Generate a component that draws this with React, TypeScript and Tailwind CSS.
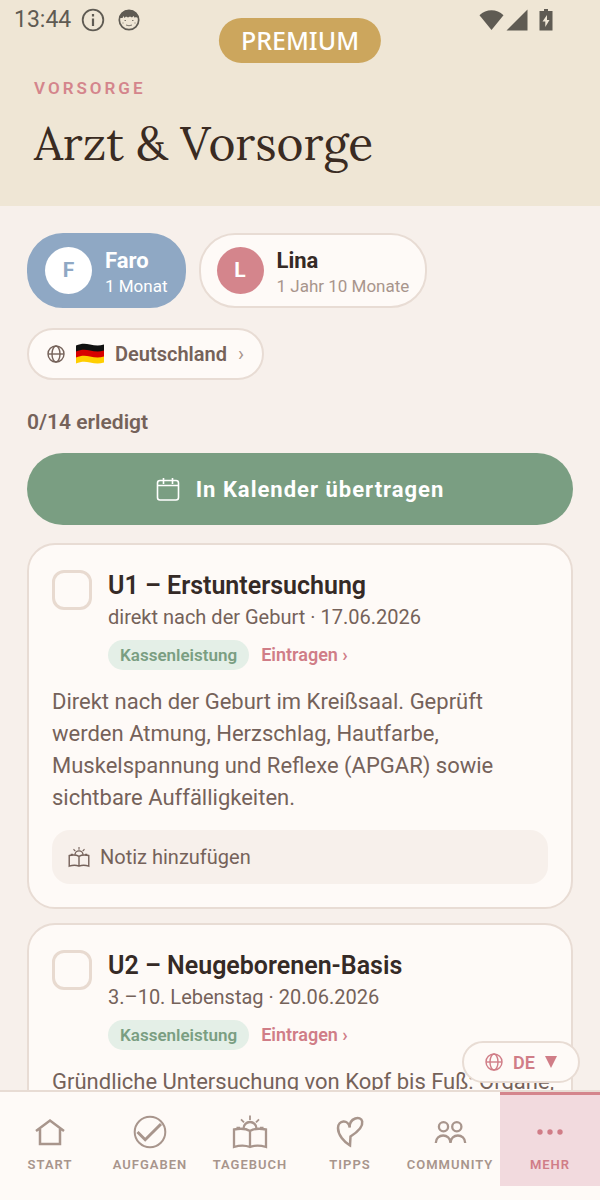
import React, { useState } from "react";
import { clsx } from "clsx";

type Child = {
  id: string;
  name: string;
  age: string;
};

type Checkup = {
  id: string;
  title: string;
  when: string;
  text: string;
};

type IconProps = { className?: string };

const children: Child[] = [
  { id: "faro", name: "Faro", age: "1 Monat" },
  { id: "lina", name: "Lina", age: "1 Jahr 10 Monate" },
];

const checkups: Checkup[] = [
  {
    id: "u1",
    title: "U1 – Erstuntersuchung",
    when: "direkt nach der Geburt · 17.06.2026",
    text: "Direkt nach der Geburt im Kreißsaal. Geprüft werden Atmung, Herzschlag, Hautfarbe, Muskelspannung und Reflexe (APGAR) sowie sichtbare Auffälligkeiten.",
  },
  {
    id: "u2",
    title: "U2 – Neugeborenen-Basis",
    when: "3.–10. Lebenstag · 20.06.2026",
    text: "Gründliche Untersuchung von Kopf bis Fuß: Organe,",
  },
];

function Svg({
  className,
  size = 36,
  stroke = 2.5,
  children,
}: IconProps & { size?: number; stroke?: number; children: React.ReactNode }) {
  return (
    <svg
      className={className}
      viewBox={`0 0 ${size} ${size}`}
      fill="none"
      stroke="currentColor"
      strokeWidth={stroke}
      aria-hidden="true"
    >
      {children}
    </svg>
  );
}

const HomeIcon = ({ className }: IconProps) => (
  <Svg className={className}>
    <path d="M4 17 18 6.5 32 17M8 15v15h20V15" />
  </Svg>
);

const TasksIcon = ({ className }: IconProps) => (
  <Svg className={className} stroke={2}>
    <circle cx="18" cy="18" r="15.3" />
    <path d="m5.5 18 7.700 7.700L29 10" strokeWidth="3" />
  </Svg>
);

const DiaryIcon = ({ className }: IconProps) => (
  <Svg className={className} stroke={2.3}>
    <path d="M18 17C14 14.500 7 14.500 2 15.500v17.500c5-1.600 12-1.600 16 0 4-1.600 11-1.600 16 0V15.500c-5-1-12-1-16 1.500ZM18 17v16" />
    <path d="M11.500 14.500a6.500 6.500 0 0 1 13 0M4.500 14H8M28 14h3.500" />
    <path d="M18 1.500V6M9 5.300l3 3M27 5.300l-3 3" strokeWidth="1.8" />
  </Svg>
);

const TipsIcon = ({ className }: IconProps) => (
  <Svg className={className}>
    <path d="M18 31.500C12 28 6 21 6 14 6 6 16.500 5 17.700 13.500 17 4 29 1 30.200 7.500 31.200 13 24 19 18.500 22.500Z" />
  </Svg>
);

const CommunityIcon = ({ className }: IconProps) => (
  <Svg className={className} stroke={2.3}>
    <circle cx="11.5" cy="12.8" r="4.6" />
    <circle cx="24.8" cy="12.8" r="4.600" />
    <path d="M3.800 29c0-10 14.700-10 14.700 0 0-10 14.700-10 14.700 0" />
  </Svg>
);

const MoreIcon = ({ className }: IconProps) => (
  <svg className={className} viewBox="0 0 36 36" fill="currentColor" aria-hidden="true">
    <circle cx="8" cy="18" r="2.7" />
    <circle cx="18" cy="18" r="2.7" />
    <circle cx="28" cy="18" r="2.7" />
  </svg>
);

const GlobeIcon = ({ className }: IconProps) => (
  <Svg className={className} size={18} stroke={1.4}>
    <circle cx="9" cy="9" r="8" />
    <ellipse cx="9" cy="9" rx="4" ry="8" />
    <path d="M1 9h16" />
  </Svg>
);

const CalendarIcon = ({ className }: IconProps) => (
  <Svg className={className} size={24} stroke={1.6}>
    <rect x="1.5" y="3.5" width="21" height="19.5" rx="2.5" />
    <path d="M1.500 8.500h21M7.500 1v6M16.500 1v6" />
  </Svg>
);

const FlagDe = ({ className }: IconProps) => (
  <svg className={className} viewBox="0 0 28 22" aria-hidden="true">
    <path d="M0 2.500C5 .5 9 .5 14 1.500s9 1.500 14 0V12H0Z" fill="#111" />
    <path d="M0 8.500c5-2 9-2 14-1s9 1.500 14 0V16H0Z" fill="#d80000" />
    <path d="M0 14.500c5-2 9-2 14-1s9 1.500 14 0v6c-5 1.500-9 1-14 0s-9-1-14 1Z" fill="#ffce00" />
  </svg>
);

function StatusBar() {
  return (
    <div className="flex h-10 items-center justify-between pl-3.5 pr-[46px] text-[#5f5b53]">
      <div className="flex items-center">
        <span className="text-[23px] leading-8">13:44</span>
        <svg className="ml-2.5 size-6" viewBox="0 0 24 24" fill="none" aria-hidden="true">
          <circle cx="12" cy="12" r="10.3" stroke="currentColor" strokeWidth="1.8" />
          <path d="M12 10.500v7.500M12 6v2.400" stroke="currentColor" strokeWidth="2.2" />
        </svg>
        <svg className="ml-3 size-6" viewBox="0 0 24 24" fill="none" aria-hidden="true">
          <circle cx="12" cy="12" r="9.7" stroke="currentColor" strokeWidth="1.7" />
          <path
            d="M2.500 10C3.500 5 7.500 2 12 2s8.500 3 9.500 8l-3-1-.5 1-1.500-2-1.500 1.500L13 8.500l-2 1-2-1-1.500 1.500L6.500 8l-1 2Z"
            fill="currentColor"
          />
          <path
            d="M7.500 12.500h1.500M15 12.500h1.500M9 17q3 1.500 6 0M5.500 15h1M17.500 15h1"
            stroke="currentColor"
            strokeWidth=".8"
          />
        </svg>
      </div>
      <div className="flex items-center">
        <svg className="h-[22px] w-[25px]" viewBox="0 0 26 22" fill="currentColor" aria-hidden="true">
          <path d="M.5 6C7.500-.8 18.500-.8 25.500 6L13 21.500Z" />
        </svg>
        <svg className="ml-0.5 size-[22px]" viewBox="0 0 22 22" fill="currentColor" aria-hidden="true">
          <path d="M21.500.5v21H.5Z" />
        </svg>
        <svg className="ml-2.5 h-[22px] w-4" viewBox="0 0 16 22" aria-hidden="true">
          <path d="M6 0h4v2h4.500v19.500h-13V2H6Z" fill="currentColor" />
          <path d="M9 6 4.500 12.500h2.800V18L11.500 11H9Z" fill="#efe6d5" />
        </svg>
      </div>
    </div>
  );
}

function ChildChip({
  child,
  active,
  onSelect,
}: {
  child: Child;
  active: boolean;
  onSelect: () => void;
}) {
  return (
    <button
      type="button"
      onClick={onSelect}
      aria-pressed={active}
      className={clsx(
        "flex h-[75px] items-center gap-[13px] rounded-[36px] border-2 px-4 text-left",
        active ? "border-[#8fa8c4] bg-[#8fa8c4]" : "border-[#e8dcd4] bg-[#fefaf7]"
      )}
    >
      <span
        className={clsx(
          "flex size-[47px] items-center justify-center rounded-full text-[21px] font-bold",
          active ? "bg-white text-[#8fa8c4]" : "bg-[#d4858c] text-white"
        )}
      >
        {child.name[0]}
      </span>
      <span className="flex flex-col">
        <span
          className={clsx(
            "text-[22px] leading-[30px] font-bold",
            active ? "text-white" : "text-[#352a26]"
          )}
        >
          {child.name}
        </span>
        <span
          className={clsx(
            "text-[17px] leading-5",
            active ? "text-white" : "text-[#a8958c]"
          )}
        >
          {child.age}
        </span>
      </span>
    </button>
  );
}

function CheckupCard({
  item,
  done,
  onToggle,
}: {
  item: Checkup;
  done: boolean;
  onToggle: () => void;
}) {
  return (
    <article className="rounded-[28px] border-2 border-[#e8dcd4] bg-[#fefaf7] px-[23px] pt-[25px] pb-[23px]">
      <div className="flex gap-4">
        <input
          id={item.id}
          type="checkbox"
          checked={done}
          onChange={onToggle}
          className="size-10 shrink-0 appearance-none rounded-xl border-3 border-[#e8dad0] checked:bg-[#7a9e82]"
        />
        <div>
          <label
            htmlFor={item.id}
            className="block text-[25px] leading-8 font-semibold text-[#352a26]"
          >
            {item.title}
          </label>
          <p className="text-[20px] leading-[30px] text-[#75625a]">{item.when}</p>
          <div className="mt-2 flex items-center gap-3">
            <span className="rounded-full bg-[#e4efe7] px-3 text-[17px] leading-[30px] font-semibold text-[#7a9e82]">
              Kassenleistung
            </span>
            <button
              type="button"
              className="text-[18px] leading-[30px] font-semibold text-[#d07d87]"
            >
              Eintragen ›
            </button>
          </div>
        </div>
      </div>
      <p className="-mr-[11px] mt-4 text-[22px] leading-8 text-[#75625a]">{item.text}</p>
      <button
        type="button"
        className="mt-4 flex h-[54px] w-full items-center gap-2.5 rounded-[18px] bg-[#f7f0eb] px-4 text-[20px] text-[#75625a]"
      >
        <DiaryIcon className="size-[22px]" />
        Notiz hinzufügen
      </button>
    </article>
  );
}

const tabs = [
  { label: "START", icon: HomeIcon },
  { label: "AUFGABEN", icon: TasksIcon },
  { label: "TAGEBUCH", icon: DiaryIcon },
  { label: "TIPPS", icon: TipsIcon },
  { label: "COMMUNITY", icon: CommunityIcon },
  { label: "MEHR", icon: MoreIcon },
];

function TabBar() {
  return (
    <nav className="grid shrink-0 grid-cols-6 border-t-2 border-[#e8dcd4] bg-[#fefaf7] pb-3.5">
      {tabs.map(({ label, icon: Icon }) => {
        const active = label === "MEHR";
        return (
          <a
            key={label}
            href={`#${label.toLowerCase()}`}
            aria-current={active ? "page" : undefined}
            className={clsx(
              "flex h-[94px] flex-col items-center gap-[5px] border-t-3 pt-[19px]",
              active
                ? "border-[#d4858c] bg-[#f2dade] text-[#d07d87]"
                : "border-transparent text-[#a8958c]"
            )}
          >
            <Icon className="size-9" />
            <span className="text-[13px] leading-5 font-semibold tracking-[1px]">
              {label}
            </span>
          </a>
        );
      })}
    </nav>
  );
}

export default function App() {
  const [selected, setSelected] = useState("faro");
  const [done, setDone] = useState<string[]>([]);

  const toggle = (id: string) =>
    setDone((d) => (d.includes(id) ? d.filter((x) => x !== id) : [...d, id]));

  return (
    <div className="flex h-screen flex-col bg-[#f7f0eb] font-[Roboto,sans-serif]">
      {/* Header */}
      <header className="relative shrink-0 bg-[#efe6d5] pb-8">
        <StatusBar />
        <span className="absolute top-[18px] left-1/2 -translate-x-1/2 rounded-full bg-[#cca65d] px-[22px] font-['Noto_Sans',sans-serif] text-[25px] leading-[45px] font-medium text-white">
          PREMIUM
        </span>
        <div className="px-[34px] pt-[38px]">
          <p className="text-[17px] leading-5 font-semibold tracking-[3px] text-[#d4858c]">
            VORSORGE
          </p>
          <h1 className="mt-4 font-[Lora,'Liberation_Serif',serif] text-[46px] leading-[60px] text-[#3a2b22]">
            Arzt &amp; Vorsorge
          </h1>
        </div>
      </header>

      {/* Content */}
      <div className="relative min-h-0 flex-1">
        <main className="h-full overflow-y-auto px-[27px] pt-[27px] [scrollbar-width:none]">
          <div className="flex gap-[13px]">
            {children.map((c) => (
              <ChildChip
                key={c.id}
                child={c}
                active={c.id === selected}
                onSelect={() => setSelected(c.id)}
              />
            ))}
          </div>

          <button
            type="button"
            className="mt-5 flex h-13 items-center gap-[11px] rounded-full border-2 border-[#e8dcd4] bg-[#fefaf7] px-[18px] text-[20px] font-semibold text-[#75625a]"
          >
            <GlobeIcon className="size-[18px]" />
            <FlagDe className="h-[22px] w-7" />
            <span>Deutschland</span>
            <span className="font-normal text-[#a8958c]">›</span>
          </button>

          <p className="mt-[26px] text-[21px] leading-8 font-semibold text-[#75625a]">
            {done.length}/14 erledigt
          </p>

          <button
            type="button"
            className="mt-[15px] flex h-[72px] w-full items-center justify-center gap-4 rounded-full bg-[#7a9e82] text-[22px] font-bold tracking-[1px] text-white"
          >
            <CalendarIcon className="size-6" />
            In Kalender übertragen
          </button>

          <div className="mt-[18px] flex flex-col gap-3.5 pb-6">
            {checkups.map((item) => (
              <CheckupCard
                key={item.id}
                item={item}
                done={done.includes(item.id)}
                onToggle={() => toggle(item.id)}
              />
            ))}
          </div>
        </main>

        {/* Language switch, floats over the list */}
        <button
          type="button"
          className="absolute right-5 bottom-[7px] flex h-[42px] items-center gap-2.5 rounded-full border-2 border-[#e8dcd4] bg-[#fefaf7] px-[21px] text-[18px] font-semibold text-[#d07d87]"
        >
          <GlobeIcon className="size-[18px]" />
          <span>DE</span>
          <svg className="h-3 w-3" viewBox="0 0 12 12" fill="currentColor" aria-hidden="true">
            <path d="M0 0h12L6 12Z" />
          </svg>
        </button>
      </div>

      <TabBar />
    </div>
  );
}
